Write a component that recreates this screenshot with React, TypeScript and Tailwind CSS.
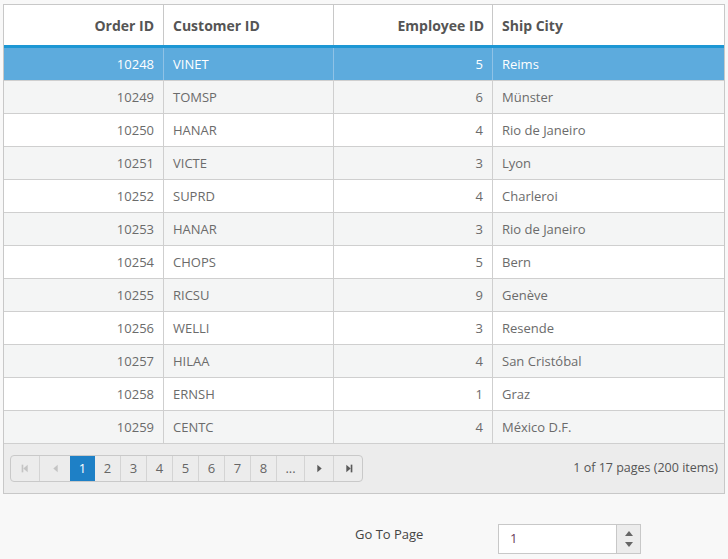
import React from "react";

const rows: [string, string, string, string][] = [
  ["10248", "VINET", "5", "Reims"],
  ["10249", "TOMSP", "6", "Münster"],
  ["10250", "HANAR", "4", "Rio de Janeiro"],
  ["10251", "VICTE", "3", "Lyon"],
  ["10252", "SUPRD", "4", "Charleroi"],
  ["10253", "HANAR", "3", "Rio de Janeiro"],
  ["10254", "CHOPS", "5", "Bern"],
  ["10255", "RICSU", "9", "Genève"],
  ["10256", "WELLI", "3", "Resende"],
  ["10257", "HILAA", "4", "San Cristóbal"],
  ["10258", "ERNSH", "1", "Graz"],
  ["10259", "CENTC", "4", "México D.F."],
];

const Tri = ({ dir, bar, color }: { dir: "l" | "r"; bar?: boolean; color: string }) => (
  <svg width="11" height="11" viewBox="0 0 10 10">
    {dir === "l" ? (
      <>
        {bar && <rect x="1.5" y="1.5" width="1.5" height="7" fill={color} />}
        <polygon points="7,1.5 7,8.5 3,5" fill={color} />
      </>
    ) : (
      <>
        <polygon points="3,1.5 3,8.5 7,5" fill={color} />
        {bar && <rect x="7" y="1.5" width="1.5" height="7" fill={color} />}
      </>
    )}
  </svg>
);

export default function App() {
  const font = { fontFamily: '"Open Sans", "Noto Sans", sans-serif' };
  return (
    <div className="w-[728px] h-[559px] bg-[#f8f8f8] pt-[4px] pl-[3px] text-[13px]" style={font}>
      <div className="w-[722px] border border-[#c8c8c8] bg-white">
        <div className="flex h-[43px] border-b-[3px] border-[#1d97d4] font-bold text-[#555] text-[14px]">
          <div className="w-[160px] border-r border-[#c8c8c8] flex items-center justify-end pr-[9px]">Order ID</div>
          <div className="w-[170px] border-r border-[#c8c8c8] flex items-center pl-[9px]">Customer ID</div>
          <div className="w-[159px] border-r border-[#c8c8c8] flex items-center justify-end pr-[8px]">Employee ID</div>
          <div className="flex-1 flex items-center pl-[9px]">Ship City</div>
        </div>
        {rows.map((r, i) => {
          const sel = i === 0;
          const bg = sel ? "bg-[#5dabdd] text-white" : i % 2 === 1 ? "bg-[#f4f5f5] text-[#6b6b6b]" : "bg-white text-[#6b6b6b]";
          const line = sel ? "border-[#8fc2e6]" : "border-[#cfcfcf]";
          return (
            <div key={r[0]} className={`flex h-[33px] border-b border-[#cfcfcf] pt-[2px] ${bg}`}>
              <div className={`w-[160px] border-r ${line} -mt-[2px] pt-[2px] flex items-center justify-end pr-[9px]`}>{r[0]}</div>
              <div className={`w-[170px] border-r ${line} -mt-[2px] pt-[2px] flex items-center pl-[9px]`}>{r[1]}</div>
              <div className={`w-[159px] border-r ${line} -mt-[2px] pt-[2px] flex items-center justify-end pr-[9px]`}>{r[2]}</div>
              <div className="flex-1 flex items-center pl-[9px]">{r[3]}</div>
            </div>
          );
        })}
        <div className="flex items-center justify-between h-[50px] bg-[#ececec] pl-[6px] pr-[6px] -mt-px border-t border-[#cfcfcf]">
          <div className="flex h-[27px] border border-[#c9c9c9] rounded-[4px] bg-[#ececec] text-[#666] overflow-hidden">
            <div className="w-[29px] flex items-center justify-center border-r border-[#d4d4d4]"><Tri dir="l" bar color="#c4c4c4" /></div>
            <div className="w-[30px] flex items-center justify-center"><Tri dir="l" color="#c4c4c4" /></div>
            <div className="w-[25px] flex items-center justify-center bg-[#1e80c6] text-white">1</div>
            {["2", "3", "4", "5", "6", "7", "8", "..."].map((p) => (
              <div key={p} className={`${p === "..." ? "w-[28px]" : "w-[26px]"} flex items-center justify-center border-r border-[#d4d4d4]`}>{p}</div>
            ))}
            <div className="w-[29px] flex items-center justify-center border-r border-[#d4d4d4]"><Tri dir="r" color="#5a5a5a" /></div>
            <div className="w-[28px] flex items-center justify-center"><Tri dir="r" bar color="#5a5a5a" /></div>
          </div>
          <div className="text-[#555] text-[12.5px]">1 of 17 pages (200 items)</div>
        </div>
      </div>
      <div className="flex items-start mt-[30px] text-[#444]">
        <div className="w-[352px]" />
        <div className="w-[143px] leading-[20px]">Go To Page</div>
        <div className="flex h-[30px] w-[143px] border border-[#c8c8c8] bg-white">
          <div className="flex-1 flex items-center pl-[11px] text-[#6a3a5a]">1</div>
          <div className="w-[24px] border-l border-[#c8c8c8] bg-[#ececec] flex flex-col items-center justify-center gap-[6px]">
            <svg width="8" height="5" viewBox="0 0 8 5"><polygon points="0,5 8,5 4,0" fill="#666" /></svg>
            <svg width="8" height="5" viewBox="0 0 8 5"><polygon points="0,0 8,0 4,5" fill="#666" /></svg>
          </div>
        </div>
      </div>
    </div>
  );
}
